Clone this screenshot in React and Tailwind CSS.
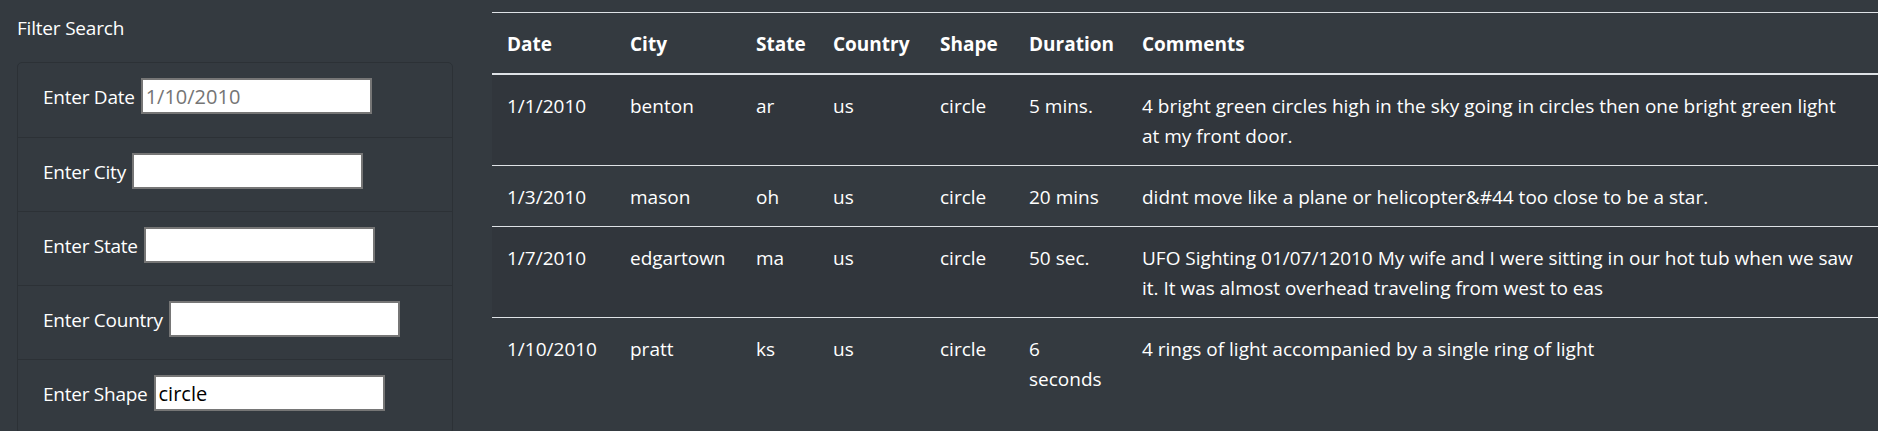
import React from 'react';

const filters = [
  { label: 'Enter Date', placeholder: '1/10/2010', value: '' },
  { label: 'Enter City', placeholder: '', value: '' },
  { label: 'Enter State', placeholder: '', value: '' },
  { label: 'Enter Country', placeholder: '', value: '' },
  { label: 'Enter Shape', placeholder: '', value: 'circle' },
];

// comments are kept as the lines they wrap into in the original layout
const sightings = [
  {
    datetime: '1/1/2010',
    city: 'benton',
    state: 'ar',
    country: 'us',
    shape: 'circle',
    duration: '5 mins.',
    comments: ['4 bright green circles high in the sky going in circles then one bright green light', 'at my front door.'],
  },
  {
    datetime: '1/3/2010',
    city: 'mason',
    state: 'oh',
    country: 'us',
    shape: 'circle',
    duration: '20 mins',
    comments: ['didnt move like a plane or helicopter&#44 too close to be a star.'],
  },
  {
    datetime: '1/7/2010',
    city: 'edgartown',
    state: 'ma',
    country: 'us',
    shape: 'circle',
    duration: '50 sec.',
    comments: ['UFO Sighting 01/07/12010 My wife and I were sitting in our hot tub when we saw', 'it. It was almost overhead traveling from west to eas'],
  },
  {
    datetime: '1/10/2010',
    city: 'pratt',
    state: 'ks',
    country: 'us',
    shape: 'circle',
    duration: '6 seconds',
    comments: ['4 rings of light accompanied by a single ring of light'],
  },
];

const FilterItem = ({ label, placeholder, value, first }) => {
  const [text, setText] = React.useState(value);
  return (
    <li className={`h-[74px] px-[25px] pt-[15px] ${first ? '' : 'border-t border-[#2c3136]'}`}>
      <div className="flex items-baseline gap-[6px]">
        <label className="tracking-[-0.25px]">{label}</label>
        <input
          type="text"
          value={text}
          placeholder={placeholder}
          onChange={(e) => setText(e.target.value)}
          className="h-[36px] w-[231px] bg-white border-2 border-[#767676] px-[3px] text-[20px] text-black placeholder:text-[#757575] outline-none"
        />
      </div>
    </li>
  );
};

const cell = 'pt-[16px] pb-[14px] px-[15px] border-t border-[#dee2e6] align-top';

export default function App() {
  return (
    <div className="min-h-screen bg-[#343a40] text-white text-[19px] leading-[30px] font-['Open_Sans',sans-serif] flex">
      {/* Filters */}
      <div className="w-[453px] shrink-0 pl-[17px] pt-[13px]">
        <h5 className="tracking-[-0.2px]">Filter Search</h5>
        <ul className="mt-[19px] border border-[#2c3136] rounded-[5px] overflow-hidden">
          {filters.map((f, i) => (
            <FilterItem key={f.label} {...f} first={i === 0} />
          ))}
        </ul>
      </div>

      {/* Table */}
      <div className="flex-1 ml-[39px] pt-[12px]">
        <table className="w-full table-fixed border-collapse">
          <colgroup>
            <col className="w-[123px]" />
            <col className="w-[126px]" />
            <col className="w-[77px]" />
            <col className="w-[107px]" />
            <col className="w-[89px]" />
            <col className="w-[113px]" />
            <col />
          </colgroup>
          <thead>
            <tr>
              {['Date', 'City', 'State', 'Country', 'Shape', 'Duration', 'Comments'].map((h) => (
                <th key={h} className="text-left font-bold pt-[16px] pb-[14px] px-[15px] border-t border-b-2 border-[#dee2e6] align-bottom">
                  {h}
                </th>
              ))}
            </tr>
          </thead>
          <tbody>
            {sightings.map((s, i) => (
              <tr key={s.datetime} className={i % 2 === 0 ? 'bg-[#31363c]' : ''}>
                <td className={cell}>{s.datetime}</td>
                <td className={cell}>{s.city}</td>
                <td className={cell}>{s.state}</td>
                <td className={cell}>{s.country}</td>
                <td className={cell}>{s.shape}</td>
                <td className={cell}>{s.duration}</td>
                <td className={cell}>
                  {s.comments.map((line, j) => (
                    <React.Fragment key={j}>
                      {j > 0 && <br />}
                      {line}
                    </React.Fragment>
                  ))}
                </td>
              </tr>
            ))}
          </tbody>
        </table>
      </div>
    </div>
  );
}
